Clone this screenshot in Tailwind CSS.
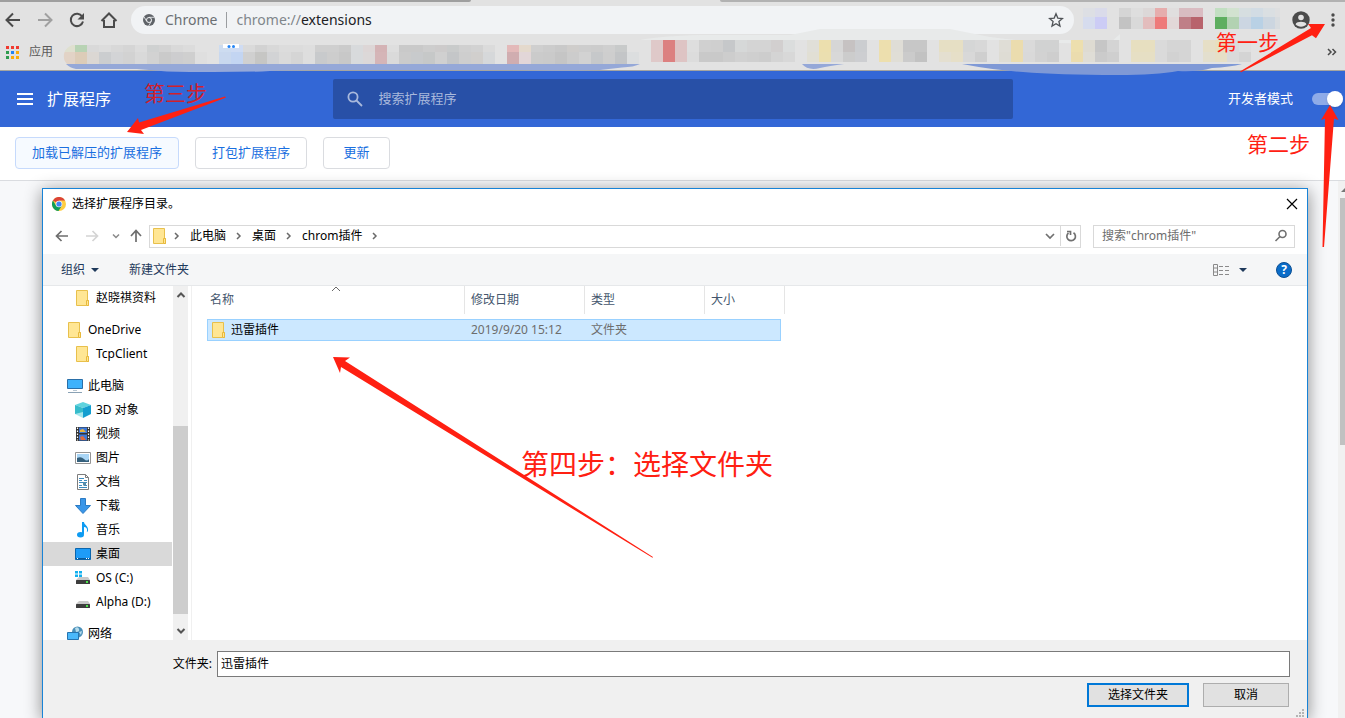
<!DOCTYPE html>
<html lang="zh-CN">
<head>
    <meta charset="UTF-8">
    <meta name="viewport" content="width=device-width, initial-scale=1.0">
    <title>扩展程序</title>
    <script src="https://cdn.jsdelivr.net/npm/@tailwindcss/browser@4"></script>
</head>
<body class="relative flex h-screen min-h-[500px] flex-col overflow-hidden bg-white font-['Noto_Sans','Noto_Sans_CJK_SC',sans-serif] text-xs text-black">

    <!-- Shared icons -->
    <svg class="hidden" aria-hidden="true">
        <symbol id="folder" viewBox="0 0 16 16">
            <path d="M1.500.5h11v10h1v5h-12z" fill="#ffe694" stroke="#e8c04c"/>
            <path d="M11.500 15V10.500h2v5h-2" fill="#ffe694" stroke="#e8b93c"/>
        </symbol>
        <symbol id="chevron" viewBox="0 0 10 10">
            <path d="M3 2l3 3-3 3" fill="none" stroke="#6a6a6a" stroke-width="1.500"/>
        </symbol>
        <symbol id="drive" viewBox="0 0 16 16">
            <path d="M4 7h9l2 3H1z" fill="#c9c9c9"/>
            <rect x="1" y="10" width="14" height="4" rx=".5" fill="#3d3d3d"/>
            <rect x="11" y="11" width="2" height="2" fill="#4be34b"/>
        </symbol>
    </svg>

    <!-- Tab strip edge -->
    <div class="flex h-[2px] shrink-0 bg-[#e2e2e2]">
        <div class="w-[35%] rounded-br-sm bg-[#9f9f9f]"></div>
        <div class="w-[18.5%]"></div>
        <div class="flex-1 rounded-bl-sm bg-[#b2b2b2]"></div>
    </div>

    <!-- Browser toolbar -->
    <div class="flex h-9 shrink-0 items-center bg-[#e2e2e2] pl-[3px]">
        <div class="flex gap-3 pr-3">
            <button aria-label="后退"><svg class="size-5" viewBox="0 0 20 20" fill="none" stroke="#4b4b4b" stroke-width="2"><path d="M17 10H4M10 3.500L3.500 10l6.500 6.500"/></svg></button>
            <button aria-label="前进"><svg class="size-5" viewBox="0 0 20 20" fill="none" stroke="#a0a0a0" stroke-width="2"><path d="M3 10h13M10 3.500l6.500 6.500-6.500 6.500"/></svg></button>
            <button aria-label="重新加载"><svg class="size-5" viewBox="0 0 20 20"><path d="M15.200 6.500A6.200 6.200 0 1 0 16 11.500" fill="none" stroke="#4b4b4b" stroke-width="2"/><path d="M17 3v6.500h-6.500z" fill="#4b4b4b"/></svg></button>
            <button aria-label="主页"><svg class="size-5" viewBox="0 0 20 20" fill="none" stroke="#4b4b4b" stroke-width="2"><path d="M2.500 11L10 3.500l7.500 7.500M5 10v7h10v-7"/></svg></button>
        </div>
        <div class="flex h-7 flex-1 items-center rounded-full bg-[#f1f3f5] pr-2.5 pl-3 text-sm text-[#6b6f73]">
            <svg class="size-3 shrink-0" viewBox="0 0 12 12"><circle cx="6" cy="6" r="6" fill="#5f6368"/><circle cx="6" cy="6" r="2.500" fill="#5f6368" stroke="#f1f3f5"/><path d="M6 3.300h5.400M3.700 7.300L1 2.800M8.300 7.300L5.600 12" stroke="#f1f3f5" stroke-width=".8"/></svg>
            <span class="ml-2.5">Chrome</span>
            <span class="mx-[9px] h-4 w-px bg-[#9a9da0]"></span>
            <label for="address" class="text-[#80868b]">chrome://</label>
            <input id="address" type="text" value="extensions" class="min-w-0 flex-1 text-[#202124] outline-none">
            <button aria-label="添加书签"><svg class="size-4" viewBox="0 0 16 16" fill="none" stroke="#4f5357" stroke-width="1.300"><path d="M8 1.800l1.800 4.300 4.700.4-3.600 3 1.100 4.600L8 11.700l-4 2.400 1.100-4.600-3.600-3 4.700-.4z"/></svg></button>
        </div>
        <svg class="h-[30px] w-[206px] shrink-0" id="toolbarTiles" aria-hidden="true"></svg>
        <button aria-label="用户" class="ml-3"><svg class="size-[18px]" viewBox="0 0 18 18"><circle cx="9" cy="9" r="8.700" fill="#4b4b4b"/><circle cx="9" cy="6.500" r="2.800" fill="#e2e2e2"/><path d="M3.500 13.200c1.500-3.200 9.500-3.200 11 0-2.500 3.300-8.500 3.300-11 0z" fill="#e2e2e2"/></svg></button>
        <button aria-label="菜单" class="mr-1.5 ml-[17px]"><svg class="h-4 w-3" viewBox="0 0 12 16" fill="#4b4b4b"><circle cx="6" cy="3" r="1.700"/><circle cx="6" cy="8" r="1.700"/><circle cx="6" cy="13" r="1.700"/></svg></button>
    </div>

    <!-- Bookmarks bar -->
    <div class="relative z-10 flex h-[33px] shrink-0 items-center border-b border-[#a5a5a0] bg-[#e2e2e2] pl-1.5">
        <a href="#" class="flex items-center gap-2.5 pb-1 text-[#5a5a5a]">
            <svg class="size-[13px]" viewBox="0 0 13 13">
                <path d="M0 0h3v3H0zM5 0h3v3H5zM10 0h3v3h-3z" fill="#f03a30"/>
                <path d="M0 5h3v3H0zM0 10h3v3H0z" fill="#2e9b4f"/>
                <path d="M5 5h3v3H5z" fill="#2384f5"/>
                <path d="M10 5h3v3h-3zM5 10h3v3H5zM10 10h3v3h-3z" fill="#fbab0c"/>
            </svg>
            应用
        </a>
        <svg class="ml-2.5 h-8 min-w-0 flex-1 overflow-visible" aria-hidden="true">
            <g transform="translate(-63 -38)">
                <path d="M640 40q20-4 60-5h90l30-6h130l40 8q60 8 120 6l10-9v6H640z" fill="#e8eaea"/>
                <g id="bookmarkTiles"></g>
                <path d="M63 44h12q-10 3-11 10-1 6 3 10h-4z" fill="#e2e2e2"/>
                <rect x="223" y="44" width="16" height="4" fill="#fff"/>
                <circle cx="229" cy="46.500" r="1.500" fill="#2384f5"/><circle cx="233.500" cy="46.500" r="1.500" fill="#2384f5"/>
                <path d="M66 64h574q-6 3-18 3.500l-22 2.500q-50 1-95 0H315q-30 0-53 1.500-50 1-95 0l-30-2.500H76q-6-1-10-5z" fill="#95a8d8"/>
                <path d="M802 64h42q-15 2-24 4-12 3-18-4z" fill="#95a8d8"/>
                <path d="M962 64h280q-12 3-30 4-14 4-34 3-22 4-60 4-60 0-95-3-30-2-61-8z" fill="#7f99d6"/>
            </g>
        </svg>
        <button aria-label="更多书签" class="mr-2 pb-1"><svg class="size-2.5" viewBox="0 0 10 10" fill="none" stroke="#4b4b4b" stroke-width="1.500"><path d="M1 2l3 3-3 3M5.500 2l3 3-3 3"/></svg></button>
    </div>

    <!-- Extensions header -->
    <header class="grid h-14 shrink-0 grid-cols-[1fr_680px_1fr] items-center bg-[#3367d6] text-white">
        <div class="flex items-center gap-3.5 pl-[17px]">
            <button aria-label="主菜单"><svg class="h-3 w-4" viewBox="0 0 16 12" fill="#fff"><path d="M0 0h16v2H0zM0 5h16v2H0zM0 10h16v2H0z"/></svg></button>
            <h1 class="text-base">扩展程序</h1>
        </div>
        <div class="flex h-10 items-center gap-4 rounded-xs bg-[#2850a7] px-3.5">
            <svg class="size-4 shrink-0" viewBox="0 0 16 16" fill="none" stroke="#a9b9dc" stroke-width="1.800"><circle cx="6" cy="6" r="4.600"/><path d="M9.500 9.500l5.500 5.500"/></svg>
            <input type="search" aria-label="搜索扩展程序" placeholder="搜索扩展程序" class="min-w-0 flex-1 text-[13px] text-white outline-none placeholder:text-[#a9b9dc]">
        </div>
        <div class="flex items-center justify-end gap-[19px] pr-0.5">
            <label for="devMode" class="text-[13px]">开发者模式</label>
            <input id="devMode" type="checkbox" checked class="relative h-3 w-[31px] appearance-none rounded-full bg-[#8fabe8] before:absolute before:-top-0.5 before:right-0 before:size-4 before:rounded-full before:bg-white before:shadow">
        </div>
    </header>

    <div class="flex h-[54px] shrink-0 items-center gap-4 border-b border-[#dadce0] pb-0.5 pl-[15px] text-[13px] text-[#1a6fe0]">
        <button class="h-8 rounded border border-[#c6dafc] bg-[#f6faff] px-4">加载已解压的扩展程序</button>
        <button class="h-8 rounded border border-[#dadce0] px-4">打包扩展程序</button>
        <button class="h-8 min-w-[67px] rounded border border-[#dadce0] px-4">更新</button>
    </div>

    <main class="flex min-h-0 flex-1 bg-[#f7f8fa]">
        <div class="flex min-w-0 flex-1 pt-[7px] pr-[30px] pl-[42px]">

            <!-- Folder picker -->
            <section class="flex min-w-0 flex-1 flex-col border border-b-0 border-[#1883d7] bg-white shadow-[0_3px_16px_rgba(0,0,0,0.45)]">
                <div class="flex h-[29px] shrink-0 items-center gap-1.5 pr-2 pl-[9px]">
                    <svg class="size-3.5" viewBox="0 0 14 14">
                        <circle cx="7" cy="7" r="7" fill="#ffcd40"/>
                        <path d="M7 7L.9 3.500A7 7 0 0 1 13.100 3.500H7z" fill="#db4437"/>
                        <path d="M.9 3.500A7 7 0 0 0 6.500 14L10 8.500 7 7 4 8.500z" fill="#0f9d58"/>
                        <circle cx="7" cy="7" r="3.300" fill="#f5f5f5"/><circle cx="7" cy="7" r="2.600" fill="#4285f4"/>
                    </svg>
                    <h2 class="flex-1">选择扩展程序目录。</h2>
                    <button aria-label="关闭"><svg class="size-3.5" viewBox="0 0 14 14" stroke="#000" stroke-width="1.200"><path d="M2 2l10 10M12 2L2 12"/></svg></button>
                </div>

                <div class="flex h-9 shrink-0 items-center px-3">
                    <button aria-label="返回" class="mr-4"><svg class="size-3.5" viewBox="0 0 14 14" fill="none" stroke="#6e6e6e" stroke-width="1.700"><path d="M13 7H2M6.500 2L1.500 7l5 5"/></svg></button>
                    <button aria-label="前进" class="mr-3"><svg class="size-3.5" viewBox="0 0 14 14" fill="none" stroke="#d4d4d4" stroke-width="1.700"><path d="M1 7h11M7.500 2l5 5-5 5"/></svg></button>
                    <button aria-label="最近浏览" class="mr-2"><svg class="size-2.5" viewBox="0 0 10 10" fill="none" stroke="#8a8a8a" stroke-width="1.500"><path d="M2 3.500l3 3 3-3"/></svg></button>
                    <button aria-label="上移" class="mr-1.5"><svg class="size-3.5" viewBox="0 0 14 14" fill="none" stroke="#6e6e6e" stroke-width="1.700"><path d="M7 13V2M2 7l5-5.500L12 7"/></svg></button>
                    <div class="flex h-[23px] flex-1 items-center gap-2 border border-[#d9d9d9] pb-px">
                        <svg class="-mr-1 ml-0.5 size-4"><use href="#folder"/></svg>
                        <svg class="size-2.5"><use href="#chevron"/></svg>
                        <a href="#">此电脑</a>
                        <svg class="size-2.5"><use href="#chevron"/></svg>
                        <a href="#">桌面</a>
                        <svg class="size-2.5"><use href="#chevron"/></svg>
                        <a href="#">chrom插件</a>
                        <svg class="size-2.5"><use href="#chevron"/></svg>
                        <button aria-label="历史位置" class="-mr-1 ml-auto"><svg class="size-3" viewBox="0 0 12 12" fill="none" stroke="#707070" stroke-width="1.700"><path d="M2 4l4 4 4-4"/></svg></button>
                        <button aria-label="刷新" class="flex h-[21px] w-5 items-center justify-center border-l border-[#d9d9d9]"><svg class="size-3" viewBox="0 0 12 12" fill="none" stroke="#707070" stroke-width="1.700"><path d="M8.500 2.800A4.300 4.300 0 1 1 3.500 3M2 1.500h3.500V5"/></svg></button>
                    </div>
                    <div class="ml-3 flex h-[23px] w-[202px] items-center border border-[#d9d9d9] pr-1.5 pl-2">
                        <input type="search" aria-label="搜索" placeholder="搜索&quot;chrom插件&quot;" class="min-w-0 flex-1 outline-none placeholder:text-[#6d6d6d]">
                        <svg class="size-3.5" viewBox="0 0 14 14" fill="none" stroke="#707070" stroke-width="1.600"><circle cx="8.500" cy="5" r="3.500"/><path d="M6 7.500L1.500 12"/></svg>
                    </div>
                </div>

                <div class="flex h-8 shrink-0 items-center border-b border-[#e6e8ea] bg-[#f5f6f7] pr-[15px] pl-[18px] text-[#1e395b]">
                    <button class="flex items-center gap-1.5">组织 <svg class="h-1 w-2" viewBox="0 0 8 4" fill="#1e395b"><path d="M0 0h8L4 4z"/></svg></button>
                    <button class="ml-[30px]">新建文件夹</button>
                    <button aria-label="更改视图" class="ml-auto flex items-center gap-2.5">
                        <svg class="h-3 w-4" viewBox="0 0 16 12" fill="none" stroke="#8a8a8a"><path d="M.5.500h4v11h-4zM.5 4h4M.5 8h4M6 2.500h4M12 2.500h4M6 6.500h4M12 6.500h4M6 10.500h4M12 10.500h4"/></svg>
                        <svg class="h-1 w-2" viewBox="0 0 8 4" fill="#1e395b"><path d="M0 0h8L4 4z"/></svg>
                    </button>
                    <button aria-label="帮助" class="ml-[29px] flex size-4 items-center justify-center rounded-full border border-[#0b4f94] bg-[#0a6cc8] font-bold text-white">?</button>
                </div>

                <div class="flex min-h-0 flex-1">
                    <!-- Navigation tree -->
                    <nav class="w-[129px] shrink-0 overflow-hidden whitespace-nowrap">
                        <a href="#" class="mb-2 flex h-6 items-center gap-[5px] pl-8"><svg class="size-4"><use href="#folder"/></svg>赵晓祺资料</a>
                        <a href="#" class="flex h-6 items-center gap-[5px] pl-6"><svg class="size-4"><use href="#folder"/></svg>OneDrive</a>
                        <a href="#" class="mb-2 flex h-6 items-center gap-[5px] pl-8"><svg class="size-4"><use href="#folder"/></svg>TcpClient</a>
                        <a href="#" class="flex h-6 items-center gap-[5px] pl-6">
                            <svg class="size-4" viewBox="0 0 16 16"><path d="M.5 1.500h15v9H.500z" fill="#3fb2fb" stroke="#2a6fa8"/><path d="M6 12h4v1H6z" fill="#b7c7d4"/><path d="M1 14.500h14" stroke="#8aa2b5"/></svg>此电脑</a>
                        <a href="#" class="flex h-6 items-center gap-[5px] pl-8">
                            <svg class="size-4" viewBox="0 0 16 16"><path d="M8 0l8 3-8 3-8-3z" fill="#5fd3de"/><path d="M0 3l8 3v10l-8-4z" fill="#a3e6ec"/><path d="M0 3l8 3v4L0 12z" fill="#36bccb"/><path d="M16 3L8 6v10l8-4z" fill="#149ed0"/></svg>3D 对象</a>
                        <a href="#" class="flex h-6 items-center gap-[5px] pl-8">
                            <svg class="size-4" viewBox="0 0 16 16"><path d="M1 1h14v14H1z" fill="#333"/><path d="M4 1.500h8V7H4z" fill="#3d78d8"/><path d="M4 8.500h8v6H4z" fill="#3d78d8"/><path d="M5 4l3-1 3 3H5z" fill="#e9b53c"/><path d="M5 11l3-1 3 4H6z" fill="#e06a3a"/><path d="M2.500 1.500v13M13.500 1.500v13" stroke="#fff" stroke-width="1.200" stroke-dasharray="1.500 1.500"/></svg>视频</a>
                        <a href="#" class="flex h-6 items-center gap-[5px] pl-8">
                            <svg class="size-4" viewBox="0 0 16 16"><path d="M.5 2.500h15v11H.500z" fill="#fff" stroke="#949494"/><path d="M2 4h12v8H2z" fill="#a9d5f5"/><path d="M2 8q4-2 7 1t5 0v3H2z" fill="#35607c"/></svg>图片</a>
                        <a href="#" class="flex h-6 items-center gap-[5px] pl-8">
                            <svg class="size-4" viewBox="0 0 16 16"><path d="M2.500.5h8l3 3v12h-11z" fill="#fff" stroke="#7d7d7d"/><path d="M10.500.5v3h3" fill="none" stroke="#7d7d7d"/><path d="M4 4.500h5M4 6.500h3M9 6.500h3M4 8.500h8M4 11.500h3M9 11.500h3M4 13.500h8" stroke="#3b8cc0"/><path d="M8 8.500h3v3H8z" fill="#5c8ea8"/></svg>文档</a>
                        <a href="#" class="flex h-6 items-center gap-[5px] pl-8">
                            <svg class="size-4" viewBox="0 0 16 16"><path d="M5.500.5h5v7h5L8 15.500.500 7.500h5z" fill="#3a96e8" stroke="#2b7bc4"/></svg>下载</a>
                        <a href="#" class="flex h-6 items-center gap-[5px] pl-8">
                            <svg class="size-4" viewBox="0 0 16 16" fill="#0d9bf2"><path d="M7 0h2c0 3 5 4 4 9-1 1.500-1.500 1.500-1 0 .5-2.500-1-4-3-4v7H7z"/><ellipse cx="5.500" cy="12.800" rx="3.500" ry="2.700"/></svg>音乐</a>
                        <a href="#" class="flex h-6 items-center gap-[5px] bg-[#d9d9d9] pl-8">
                            <svg class="size-4" viewBox="0 0 16 16"><path d="M.5 2.500h15v11H.500z" fill="#1e9cf8" stroke="#0b66ad"/><path d="M1 12.500h14" stroke="#0b5a9a"/><path d="M2 12.500h1M11 12.500h1M13 12.500h1" stroke="#fff"/></svg>桌面</a>
                        <a href="#" class="flex h-6 items-center gap-[5px] pl-8">
                            <svg class="size-4" viewBox="0 0 16 16"><use href="#drive"/><path d="M0 1h3v2.500H0zM4 1h3v2.500H4zM0 4.500h3V7H0zM4 4.500h3V7H4z" fill="#12b0ee"/></svg>OS (C:)</a>
                        <a href="#" class="mb-2 flex h-6 items-center gap-[5px] pl-8"><svg class="size-4"><use href="#drive"/></svg>Alpha (D:)</a>
                        <a href="#" class="flex h-6 items-center gap-[5px] pl-6">
                            <svg class="size-4" viewBox="0 0 16 16"><circle cx="10.500" cy="6" r="5.500" fill="#4a8fb8"/><path d="M8 2q3-2 4 1t-3 3zM12 6l3-1-1 4z" fill="#b6dcec"/><path d="M.5 6.500h11v7H.500z" fill="#4ab8fa" stroke="#2674b0"/></svg>网络</a>
                    </nav>
                    <div class="ml-px flex w-[15px] shrink-0 flex-col items-center bg-[#f0f0f0]">
                        <svg class="my-1 size-2.5 shrink-0" viewBox="0 0 10 10" fill="none" stroke="#555" stroke-width="2"><path d="M1.500 7L5 3.500 8.500 7"/></svg>
                        <div class="flex-[122_0_0]"></div>
                        <div class="w-full flex-[188_0_0] bg-[#cdcdcd]"></div>
                        <div class="flex-[8_0_0]"></div>
                        <svg class="my-1 size-2.5 shrink-0" viewBox="0 0 10 10" fill="none" stroke="#555" stroke-width="2"><path d="M1.500 3L5 6.500 8.500 3"/></svg>
                    </div>

                    <!-- File list -->
                    <div class="ml-[3px] min-w-0 flex-1 border-l border-[#f0f0f0] pl-[15px]">
                        <table class="w-[578px] table-fixed border-separate border-spacing-0 text-left">
                            <colgroup><col class="w-[258px]"><col class="w-[120px]"><col class="w-[120px]"><col class="w-[76px]"><col class="w-1"></colgroup>
                            <thead class="text-[#44566d]">
                                <tr class="h-7">
                                    <th class="relative border-r border-[#e5e5e5] pl-[3px] font-normal">名称
                                        <svg class="absolute top-0 left-1/2 h-1.5 w-2.5 -translate-x-1/2" viewBox="0 0 10 6" fill="none" stroke="#6a6a6a"><path d="M1 5l4-4 4 4"/></svg>
                                    </th>
                                    <th class="border-r border-[#e5e5e5] pl-1.5 font-normal">修改日期</th>
                                    <th class="border-r border-[#e5e5e5] pl-1.5 font-normal">类型</th>
                                    <th colspan="2" class="border-r border-[#e5e5e5] pl-1.5 font-normal">大小</th>
                                </tr>
                            </thead>
                            <tbody class="text-[#6d6d6d] before:block before:h-[5px] before:content-['']">
                                <tr class="h-[22px]">
                                    <td class="border-y border-l border-[#99d1ff] bg-[#cce8ff] pl-[3px] text-black"><span class="flex items-center gap-1"><svg class="size-4"><use href="#folder"/></svg>迅雷插件</span></td>
                                    <td class="border-y border-[#99d1ff] bg-[#cce8ff] pl-1.5">2019/9/20 15:12</td>
                                    <td class="border-y border-[#99d1ff] bg-[#cce8ff] pl-1.5">文件夹</td>
                                    <td class="border-y border-r border-[#99d1ff] bg-[#cce8ff]"></td>
                                    <td></td>
                                </tr>
                            </tbody>
                        </table>
                    </div>
                </div>

                <div class="relative shrink-0 bg-[#f0f0f0] pt-[11px] pr-[17px] pb-[11px]">
                    <div class="flex items-center">
                        <label for="folderName" class="w-[174px] pr-[5px] text-right">文件夹:</label>
                        <input id="folderName" type="text" value="迅雷插件" class="h-[26px] min-w-0 flex-1 border border-[#7a7a7a] bg-white px-[3px] pb-0.5 outline-none">
                    </div>
                    <div class="mt-1.5 flex justify-end gap-3.5 pr-px">
                        <button class="h-6 w-[102px] border-2 border-[#0078d7] bg-[#e1e1e1]">选择文件夹</button>
                        <button class="h-6 w-[86px] border border-[#adadad] bg-[#e1e1e1]">取消</button>
                    </div>
                    <svg class="absolute right-0.5 bottom-0 size-2.5" viewBox="0 0 10 10" fill="#b4b4b4"><path d="M7 1h2v2H7zM7 4h2v2H7zM4 4h2v2H4zM7 7h2v2H7zM4 7h2v2H4zM1 7h2v2H1z"/></svg>
                </div>
            </section>
        </div>

        <!-- Page scrollbar -->
        <div class="z-10 flex w-[7px] shrink-0 flex-col bg-[#f1f1f1] pl-0.5">
            <svg class="h-[17px] w-[5px]" viewBox="0 0 5 17"><path d="M1 11l4-4v4z" fill="#777"/></svg>
            <div class="h-[46%] bg-[#c1c1c1]"></div>
        </div>
    </main>

    <!-- Step notes drawn over the windows -->
    <div class="pointer-events-none absolute inset-0 z-20 text-[21px] leading-8 whitespace-nowrap text-[#ff2012]">
        <span class="absolute top-[26px] left-[1216px]">第一步</span>
        <span class="absolute top-[128px] left-[1247px]">第二步</span>
        <span class="absolute top-[77px] left-[144px] text-[#d0202c]">第三步</span>
        <span class="absolute top-[448px] left-[521px] text-[28px]">第四步：选择文件夹</span>
        <svg class="absolute inset-0 size-full" fill="#ff2012">
            <path d="M1325 24l-17 0 3 4-71 43.500 1 .8 71-37 4 3z"/>
            <path d="M1330 105l-9 15 4-1.500-2.500 128.500h1.500l10-128.500 4.500 1.500z"/>
            <path d="M127 132l11-14 1 4.500 86-26 1 1-85 32.500 3 4z"/>
            <path d="M333 357l17 .5-5 3.500 308 196-.5.800L341 367l-1 6z"/>
        </svg>
    </div>

    <script>
        // x, upper colour, lower colour; every tile is 12px wide
        const bookmarks = [
            [63, '#dfe0cf', '#e2d3c6'], [75, '#b8d3b4', '#dcccb8'], [87, '#d9d9d9', '#dbd7d3'], [99, '#dcdcdc', '#cbcdcf'],
            [111, '#d8d8d8', '#d3d4d6'], [123, '#d5d5d5', '#d2d2d2'], [135, '#dcdcdc', '#d9d9d9'], [147, '#cfd1d1', '#d2d2d2'],
            [159, '#d3d3d3', '#cacaca'], [171, '#d9d9d9', '#cdcdcf'], [183, '#dcdcdc', '#cfcfcf'], [195, '#e2e2e2', '#dfdfdf'],
            [219, '#cddcf0', '#c9d8ee'], [231, '#cfdcf3', '#c3d5f2'], [243, '#dadada', '#d0d0d0'], [255, '#d2d2d2', '#c6c6c4'],
            [267, '#d8d8d8', '#d2d3d5'], [279, '#dcdcdc', '#dadada'], [291, '#dcdcdc', '#d5d5d5'], [303, '#dedede', '#dedede'],
            [315, '#cfcfcf', '#c8cacc'], [327, '#cfcfcf', '#cdcdcd'], [339, '#cbcbcb', '#c8c8c8'], [351, '#d8dadc', '#d8dadc'],
            [363, '#ddd6d6', '#dcd8d8'], [375, '#d4b3b5', '#d5b5b7'], [387, '#dedede', '#dadada'], [399, '#c9c9c9', '#cbcbcb'],
            [411, '#c9c9c9', '#c8cacc'], [423, '#cdcdcd', '#c6c8c8'], [435, '#cdcbcb', '#d0d0d0'], [447, '#c9cbcb', '#c4c6c8'],
            [459, '#d0d0d0', '#cecece'], [471, '#d2d2d2', '#d1cfcd'], [483, '#dbdbdb', '#d6d8da'], [507, '#e3b9b9', '#d0adb0'],
            [519, '#e4d9cc', '#e2d6d8'], [531, '#cfcfcf', '#cbcbcb'], [543, '#cccccc', '#cacaca'], [555, '#c9c9c9', '#c5c5c5'],
            [567, '#cfcdcb', '#cccccc'], [579, '#cdcdcd', '#d2d2d2'], [591, '#cccccc', '#c6c8ca'], [603, '#cfcfcf', '#cecece'],
            [615, '#c8caca', '#c3c5c7'], [627, '#e2e2e2', '#dcdedf'], [651, '#dfc9c9', '#dfc9c9'], [663, '#dc8080', '#dc8080'],
            [675, '#dec4c4', '#dec4c4'], [687, '#dedede', '#dcdcdc'], [699, '#d0d0d0', '#c9c9c9'], [711, '#cfcfcf', '#c9c9c9'],
            [723, '#c6c8ca', '#cdcdcd'], [735, '#d6d8d8', '#d1d1d1'], [747, '#d4d4d4', '#cfcfcf'], [759, '#d4d4d4', '#cdcdcd'],
            [771, '#d2cfcf', '#d4d4d4'], [783, '#dbdddd', '#d8d8d8'], [807, '#e0dfd8', '#e1dfd4'], [819, '#ecdfae', '#ebdfb0'],
            [831, '#d6d6d6', '#d8d8d8'], [843, '#c6c2c2', '#cccccc'], [855, '#cbcdd0', '#cdced1'], [879, '#eddfae', '#eddfae'],
            [891, '#dfddd6', '#e0ded6'], [903, '#c7c7c7', '#cbcbcb'], [915, '#c7c7c7', '#c2c2c2'], [939, '#e6dfc4', '#e4dfd0'],
            [951, '#e6dfc4', '#e6dfc8'], [963, '#d5d6d6', '#d8d8d8'], [975, '#d8d8d8', '#cfcfcf'], [999, '#dfddd6', '#dedcd4'],
            [1011, '#ebdcae', '#ebdcae'], [1023, '#dadada', '#d9d9d9'], [1035, '#d1d2d2', '#d2d2d2'], [1047, '#d1d2d2', '#cecece'],
            [1071, '#eddfae', '#ebdcae'], [1083, '#dedbd2', '#dfddd6'], [1095, '#c6c6c6', '#cbcbcb'], [1107, '#d4d4d4', '#cfcfcf'],
            [1131, '#e7dfc0', '#e6dfc4'], [1143, '#e7dfc0', '#e6dfc4'], [1155, '#dadada', '#dadada'], [1167, '#d5d5d5', '#d2d2d2'],
            [1179, '#d5d5d5', '#d5d5d5'], [1203, '#e6dfc6', '#e3dfce'], [1215, '#e8dfbe', '#e6dfc6'], [1227, '#dbdbdb', '#dadada'],
            [1239, '#dfdfdf', '#d4d4d4']
        ];
        const toolbar = [
            [9, '#dddfe4', '#d6dcee'], [21, '#dadbea', '#ccccf5'], [45, '#d5d5d5', '#c3c3c3'], [57, '#dedede', '#d9d9d9'],
            [69, '#dcd8d8', '#e3bdbd'], [81, '#e6adad', '#ee7a7a'], [93, '#e0dede', '#e2d8d8'], [105, '#d8bcc1', '#bf7f87'],
            [117, '#dabcc2', '#b8636c'], [141, '#c2dfc2', '#5eae60'], [153, '#d2e2d0', '#b2d2b2'], [165, '#d6dee0', '#ccd6e2'],
            [177, '#d2dce4', '#b9d1e5'], [189, '#dadfe2', '#ccd6e0'], [201, '#dedfe0', '#d8dcdf']
        ];

        function drawTiles(target, tiles, top, middle, bottom) {
            for (const [x, upper, lower] of tiles) {
                for (const [y, height, fill] of [[top, middle - top, upper], [middle, bottom - middle, lower]]) {
                    const rect = document.createElementNS('http://www.w3.org/2000/svg', 'rect');
                    rect.setAttribute('x', x);
                    rect.setAttribute('y', y);
                    rect.setAttribute('width', 12);
                    rect.setAttribute('height', height);
                    rect.setAttribute('fill', fill);
                    target.appendChild(rect);
                }
            }
        }

        const bookmarkTiles = document.getElementById('bookmarkTiles');
        drawTiles(bookmarkTiles, bookmarks.filter(t => t[0] < 640), 45, 52, 64);
        drawTiles(bookmarkTiles, bookmarks.filter(t => t[0] > 640), 40, 52, 62);
        drawTiles(document.getElementById('toolbarTiles'), toolbar, 3, 12, 24);
    </script>

</body>
</html>
